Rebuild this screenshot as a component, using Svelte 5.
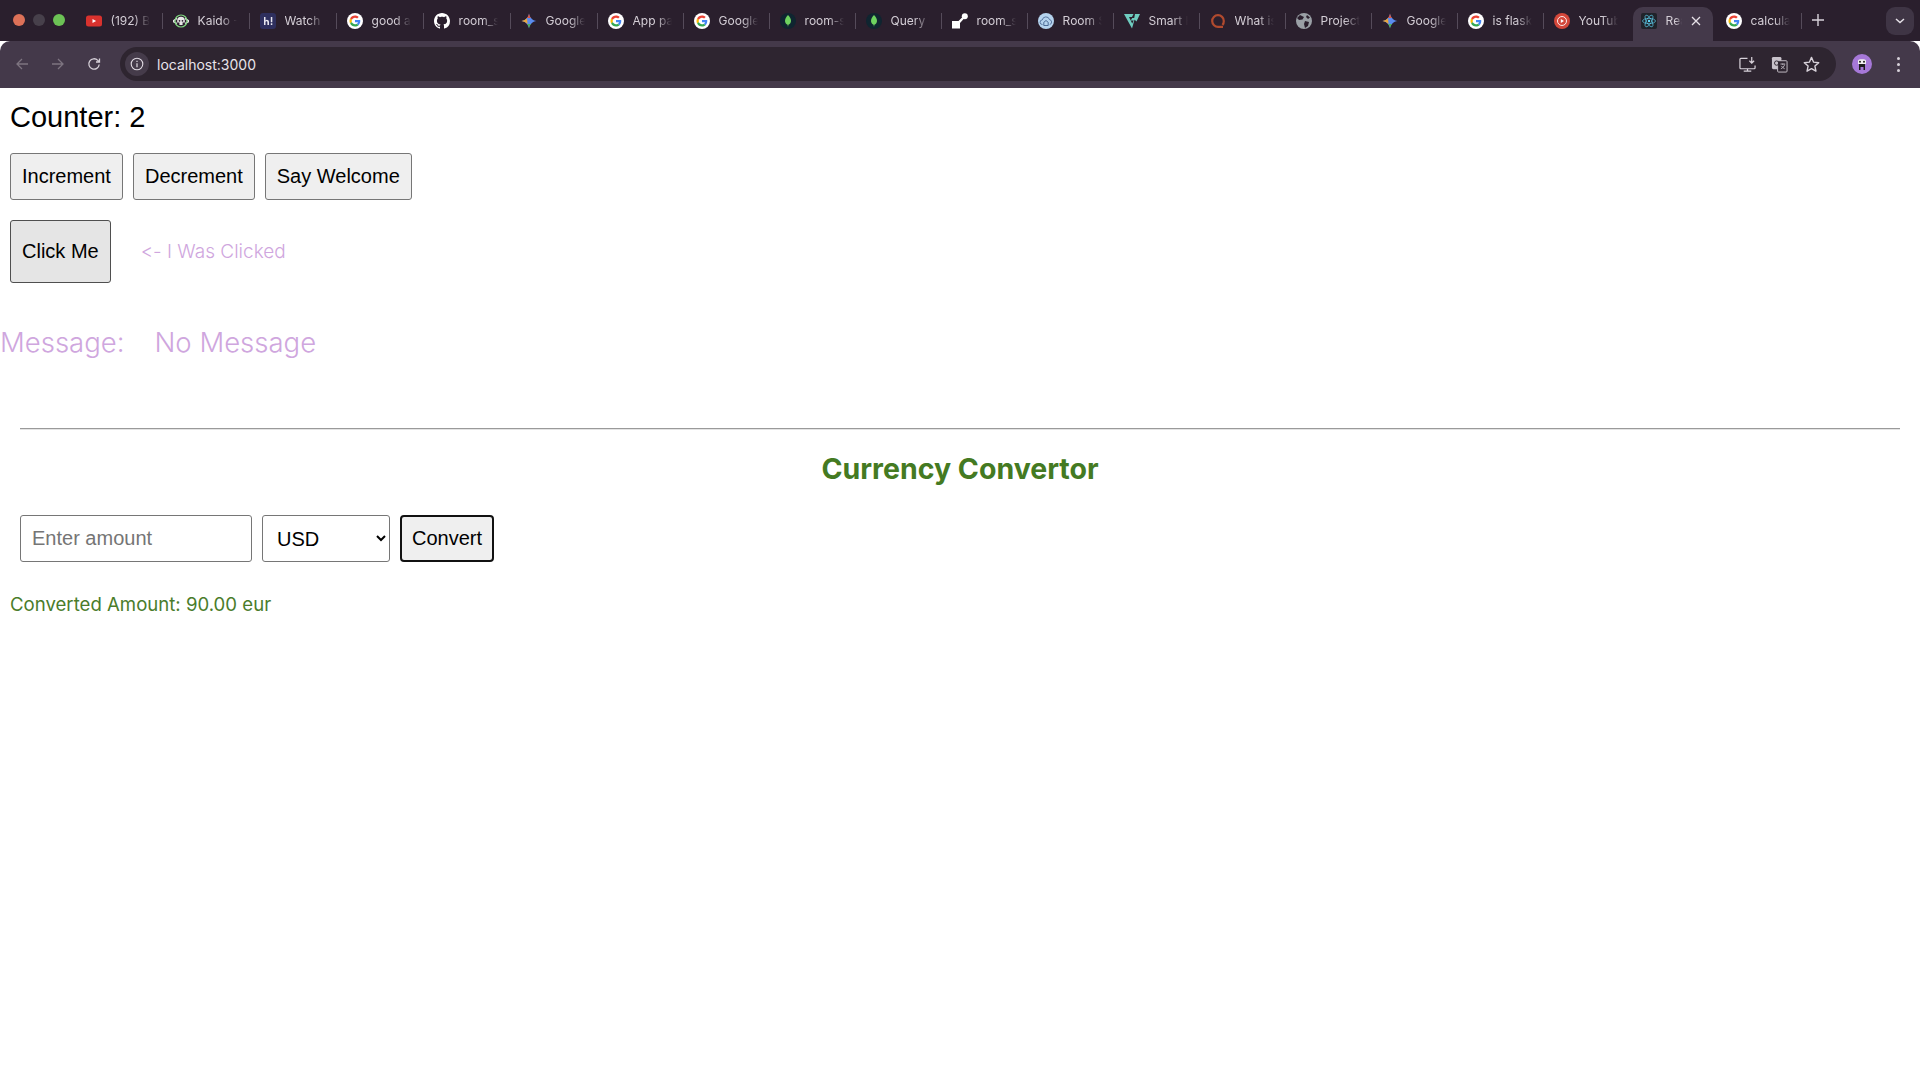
<script>
  const tabs = [
    ['yt', '(192) Bleach'], ['kaido', 'Kaido - Watch'], ['hi', 'Watch Anime'], ['g', 'good and bad'],
    ['gh', 'room_sync'], ['gem', 'Google Gemini'], ['g', 'App password'], ['g', 'Google Search'],
    ['leaf', 'room-sync'], ['leaf', 'Query Result'], ['share', 'room_sync'], ['cloud', 'Room Sync'],
    ['tri', 'Smart Home'], ['q', 'What is it'], ['globe', 'Project Home'], ['gem', 'Google Gemini'],
    ['g', 'is flask good'], ['music', 'YouTube Music'], ['react', 'React App'], ['g', 'calculator']
  ];
</script>

{#snippet icon(kind)}
  {#if kind === 'yt'}
    <svg viewBox="0 0 16 16" class="fav"><rect y="2.5" width="16" height="11" rx="2.5" fill="#d9322e"/><path d="M6.5 6v4l3.6-2z" fill="#fff"/></svg>
  {:else if kind === 'kaido'}
    <svg viewBox="0 0 16 16" class="fav"><path d="M0 8.2 4 5.4M16 8.2 12 5.4M0 8.4 4 10.5M16 8.4 12 10.5" stroke="#e8e8e8" stroke-width="1.4" fill="none"/><circle cx="8" cy="8" r="6" fill="none" stroke="#7fd67f" stroke-width="1.2"/><path d="M4.2 7.5a3.8 3.8 0 0 1 7.6 0v2H9.6V12H6.4V9.5H4.2z" fill="#e8e8e8"/><circle cx="6.5" cy="7.8" r=".9" fill="#2a1f2d"/><circle cx="9.5" cy="7.8" r=".9" fill="#2a1f2d"/></svg>
  {:else if kind === 'hi'}
    <svg viewBox="0 0 16 16" class="fav"><rect width="16" height="16" rx="3" fill="#2e2f5e"/><path d="M4 4v8h1.5V9.4c0-1.4 1.9-1.4 1.9 0V12H9V9c0-2.300-2.500-2.700-3.500-1.600V4zM10.800 4h1.500v5.200h-1.500zM10.800 10.300h1.500V12h-1.500z" fill="#e8e6f0"/></svg>
  {:else if kind === 'g'}
    <svg viewBox="0 0 16 16" class="fav"><circle cx="8" cy="8" r="8" fill="#fff"/><g transform="translate(2.500 2.500) scale(.229)"><path fill="#EA4335" d="M24 9.500c3.540 0 6.710 1.220 9.210 3.600l6.850-6.850C35.900 2.380 30.470 0 24 0 14.620 0 6.510 5.380 2.560 13.220l7.980 6.190C12.430 13.720 17.740 9.500 24 9.500z"/><path fill="#4285F4" d="M46.980 24.550c0-1.570-.15-3.090-.38-4.550H24v9.020h12.940c-.58 2.960-2.260 5.480-4.780 7.180l7.730 6c4.510-4.180 7.090-10.360 7.090-17.650z"/><path fill="#FBBC05" d="M10.530 28.590c-.48-1.450-.76-2.990-.76-4.590s.27-3.140.76-4.590l-7.980-6.190C.92 16.460 0 20.120 0 24c0 3.880.92 7.540 2.560 10.780l7.970-6.190z"/><path fill="#34A853" d="M24 48c6.480 0 11.930-2.130 15.890-5.810l-7.730-6c-2.150 1.450-4.920 2.300-8.160 2.300-6.260 0-11.570-4.220-13.470-9.910l-7.980 6.190C6.510 42.620 14.620 48 24 48z"/></g></svg>
  {:else if kind === 'gh'}
    <svg viewBox="0 0 16 16" class="fav"><path fill="#fff" d="M8 0C3.580 0 0 3.580 0 8c0 3.540 2.290 6.530 5.470 7.590.4.070.55-.17.55-.38 0-.19-.01-.82-.01-1.490-2.010.37-2.530-.49-2.690-.94-.09-.23-.48-.94-.82-1.130-.28-.15-.68-.52-.01-.53.63-.01 1.080.58 1.230.82.72 1.210 1.870.87 2.330.66.070-.52.28-.87.51-1.070-1.780-.2-3.640-.89-3.640-3.950 0-.87.31-1.590.82-2.150-.08-.2-.36-1.020.08-2.120 0 0 .67-.21 2.200.82.64-.18 1.320-.27 2-.27.68 0 1.360.09 2 .27 1.530-1.040 2.200-.82 2.200-.82.44 1.100.16 1.920.08 2.120.51.56.82 1.270.82 2.150 0 3.070-1.870 3.750-3.650 3.950.29.25.54.73.54 1.480 0 1.070-.01 1.930-.01 2.200 0 .21.15.46.55.38A8.013 8.013 0 0016 8c0-4.420-3.580-8-8-8z"/></svg>
  {:else if kind === 'gem'}
    <svg viewBox="0 0 16 16" class="fav"><path d="M8 .5c.6 4 3.500 6.900 7.500 7.500-4 .6-6.900 3.500-7.500 7.500C7.400 11.500 4.500 8.600.5 8 4.500 7.400 7.400 4.500 8 .5z" fill="#5a8cf0"/><path d="M.5 8C2.800 7.650 4.700 6.600 6 5L6.500 11C5 9.400 2.800 8.350.5 8z" fill="#eaa63c"/><path d="M8 .5C7.700 2.500 6.900 4 6 5h4C9.100 4 8.300 2.500 8 .5z" fill="#e0563f"/><path d="M8 15.500c.3-2 1-3.400 2-4.500H6c1 1.100 1.700 2.500 2 4.500z" fill="#4eae5a"/></svg>
  {:else if kind === 'leaf'}
    <svg viewBox="0 0 16 16" class="fav"><circle cx="8" cy="8" r="8" fill="#0f2530"/><path d="M8 2c2 2.200 3 4 3 5.900 0 2-1.400 3.300-2.600 3.900L8 14l-.4-2.200C6.400 11.200 5 9.900 5 7.900 5 6 6 4.200 8 2z" fill="#6ed35f"/></svg>
  {:else if kind === 'share'}
    <svg viewBox="0 0 16 16" class="fav"><circle cx="12.800" cy="3.200" r="3" fill="#fff"/><path d="M0 8h6.500l5-5 1.500 1.500-5 5.500v5.500H0z" fill="#fff"/></svg>
  {:else if kind === 'cloud'}
    <svg viewBox="0 0 16 16" class="fav"><circle cx="8" cy="8" r="8" fill="#b5d3ee"/><path d="M4.500 11.500a2.300 2.300 0 0 1-.2-4.600 3.700 3.700 0 0 1 7.200-.3 2.500 2.500 0 0 1 .2 4.900" fill="none" stroke="#41608c" stroke-width=".8"/><path d="M5.800 12.500V9.300L8 7.500l2.200 1.800v3.200z" fill="none" stroke="#41608c" stroke-width=".9"/></svg>
  {:else if kind === 'tri'}
    <svg viewBox="0 0 16 16" class="fav"><path d="M0 1h9.500L8 4H5l3.200 6.500L9.700 7.500h-3L8.200 5H11L8 15.500zM11 1h5l-3.500 7.500L10 6z" fill="#6fcdc0"/></svg>
  {:else if kind === 'q'}
    <svg viewBox="0 0 16 16" class="fav"><path d="M13 13.800H8.200a5.800 5.800 0 1 1 5.600-5.800c0 1.500-.4 2.900-1.300 4" fill="none" stroke="#b04a2e" stroke-width="2.200"/></svg>
  {:else if kind === 'globe'}
    <svg viewBox="0 0 16 16" class="fav"><circle cx="8" cy="8" r="8" fill="#9aa0a6"/><path d="M4 2 8 4 6.500 6.500 3 7 1 5zM9 8l4 1-1 4-3 2-1-4zM11 2l3 2.500-2 1.500-2-2z" fill="#2a1f2d"/></svg>
  {:else if kind === 'music'}
    <svg viewBox="0 0 16 16" class="fav"><circle cx="8" cy="8" r="8" fill="#d4473a"/><circle cx="8" cy="8" r="4.500" fill="none" stroke="#fff" stroke-width=".9"/><path d="M6.800 6v4l3.200-2z" fill="#fff"/></svg>
  {:else if kind === 'react'}
    <svg viewBox="0 0 16 16" class="fav"><rect width="16" height="16" rx="2" fill="#20232a"/><g fill="none" stroke="#61dafb" stroke-width=".6"><ellipse cx="8" cy="8" rx="6.500" ry="2.600"/><ellipse cx="8" cy="8" rx="6.500" ry="2.600" transform="rotate(60 8 8)"/><ellipse cx="8" cy="8" rx="6.500" ry="2.600" transform="rotate(120 8 8)"/></g><circle cx="8" cy="8" r="1.200" fill="#61dafb"/></svg>
  {/if}
{/snippet}

<div class="browser">
  <div class="strip">
    <div class="lights"><i class="red"></i><i class="grey"></i><i class="green"></i></div>
    <div class="tabs">
      {#each tabs as [kind, title], i}
        <div class="tab" class:active={kind === 'react'} class:nosep={kind === 'music' || kind === 'react'}>
          {@render icon(kind)}
          <span class="title">{title}</span>
          {#if kind === 'react'}
            <svg class="close" viewBox="0 0 10 10"><path d="M1 1l8 8M9 1l-8 8" stroke="#e6e1e8" stroke-width="1.300"/></svg>
          {/if}
        </div>
      {/each}
    </div>
    <svg class="plus" viewBox="0 0 12 12"><path d="M6 0v12M0 6h12" stroke="#d8d2da" stroke-width="1.400"/></svg>
    <div class="dropdown"><svg viewBox="0 0 10 6"><path d="M1 1l4 3.500L9 1" fill="none" stroke="#e6e1e8" stroke-width="1.500"/></svg></div>
  </div>
  <div class="toolbar">
    <svg class="nav dim" viewBox="0 0 14 14"><path d="M13 7H2M7 2 2 7l5 5" fill="none" stroke="#7d7480" stroke-width="1.300"/></svg>
    <svg class="nav dim" viewBox="0 0 14 14"><path d="M1 7h11M7 2l5 5-5 5" fill="none" stroke="#7d7480" stroke-width="1.300"/></svg>
    <svg class="nav" viewBox="0 0 14 14"><path d="M12.200 7.500A5.200 5.200 0 1 1 10.800 3.400L12.500 5M12.500 1.500V5H9" fill="none" stroke="#d6d0d8" stroke-width="1.300"/></svg>
    <div class="omni">
      <span class="info"><svg viewBox="0 0 14 14"><circle cx="7" cy="7" r="5.800" fill="none" stroke="#e0dae2" stroke-width="1.100"/><path d="M7 6.200v4M7 3.800v1.200" stroke="#e0dae2" stroke-width="1.200"/></svg></span>
      <span class="url">localhost:3000</span>
      <span class="spacer"></span>
      <svg class="act" viewBox="0 0 18 16"><path d="M9 1.500H2a1 1 0 0 0-1 1v9a1 1 0 0 0 1 1h14a1 1 0 0 0 1-1V9M5 15h8M9 12.500V15M13.500 0v6M11 4l2.500 2.500L16 4" fill="none" stroke="#d8d2da" stroke-width="1.300"/></svg>
      <svg class="act" viewBox="0 0 18 18"><rect x="1" y="1" width="10" height="13" rx="1.500" fill="#c8c2ca"/><rect x="7" y="5" width="10" height="12" rx="1" fill="#2e2530" stroke="#c8c2ca" stroke-width="1"/><circle cx="6" cy="7.500" r="2.300" fill="none" stroke="#2e2530" stroke-width="1"/><path d="M10 8.500h5M12.500 8v1.500M14.500 9c-.5 2-2 3.500-4 4.500M11 10.500c.8 1.300 2 2.300 3.500 3" fill="none" stroke="#c8c2ca" stroke-width=".9"/></svg>
      <svg class="act" viewBox="0 0 16 16"><path d="M8 1.300l2 4.500 4.800.5-3.600 3.200 1 4.800L8 11.900l-4.200 2.400 1-4.800L1.200 6.300 6 5.800z" fill="none" stroke="#d8d2da" stroke-width="1.300" stroke-linejoin="round"/></svg>
    </div>
    <span class="avatar"><svg viewBox="0 0 20 20"><circle cx="10" cy="10" r="10" fill="#a678d8"/><path d="M6 6.500c0-1.800 8-1.800 8 0V10H6z" fill="#f0eef0"/><circle cx="8" cy="7.800" r="1" fill="#222"/><circle cx="12" cy="7.800" r="1" fill="#222"/><path d="M7 10h6v6h-1.500v-3h-3v3H7z" fill="#1c1c1c"/></svg></span>
    <span class="kebab"><i></i><i></i><i></i></span>
  </div>
</div>

<main>
  <div class="counter">Counter: 2</div>
  <div class="actions">
    <button>Increment</button>
    <button>Decrement</button>
    <button>Say Welcome</button>
  </div>
  <div class="clickrow">
    <button class="hover">Click Me</button>
    <span class="clicked">&lt;- I Was Clicked</span>
  </div>
  <div class="message"><span>Message:</span><span>No Message</span></div>
  <hr />
  <h2>Currency Convertor</h2>
  <div class="form">
    <input placeholder="Enter amount" />
    <select><option>USD</option><option>EUR</option></select>
    <button class="focus">Convert</button>
  </div>
  <div class="result">Converted Amount: 90.00 eur</div>
</main>

<style>
  :global(body) { background: #fff; }
  .browser { height: 88px; display: flex; flex-direction: column; font-family: Inter, "Liberation Sans", sans-serif; }
  .strip { height: 41px; background: #2a1f2d; display: flex; align-items: flex-start; position: relative; }
  .lights { width: 76px; flex: none; display: flex; gap: 8px; padding: 14px 0 0 13px; box-sizing: border-box; }
  .lights i { width: 12px; height: 12px; border-radius: 50%; }
  .red { background: #dd7158; }
  .grey { background: #47404b; }
  .green { background: #6cc255; }
  .tabs { display: flex; }
  .tab { width: 86px; height: 34px; margin-top: 7px; flex: none; box-sizing: border-box; padding: 0 0 7px 10px; display: flex; align-items: center; position: relative; }
  .tab:nth-child(-n+6) { width: 87px; }
  .tab::after { content: ""; position: absolute; right: 0; top: 6px; height: 16px; width: 1px; background: #554b5a; }
  .tab.nosep::after { display: none; }
  .fav { width: 16px; height: 16px; flex: none; }
  .title { margin-left: 8.600px; width: 39px; overflow: hidden; white-space: nowrap; font-size: 12px; color: #d4ced6; -webkit-mask-image: linear-gradient(90deg, #000 60%, transparent 100%); mask-image: linear-gradient(90deg, #000 60%, transparent 100%); }
  .tab.active { background: #44394a; border-radius: 10px 10px 0 0; margin-left: 3px; margin-right: 3px; width: 80px; padding-left: 8px; }
  .tab.active .title { width: 16px; }
  .close { width: 10px; height: 10px; margin-left: 9px; flex: none; }
  .plus { width: 12px; height: 12px; flex: none; margin: 14px 0 0 10px; }
  .dropdown { position: absolute; left: 1886px; top: 7px; width: 28px; height: 28px; border-radius: 9px; background: #3f3545; display: flex; align-items: center; justify-content: center; }
  .dropdown svg { width: 10px; height: 6px; }
  .toolbar { height: 47px; background: #44394a; display: flex; align-items: center; box-sizing: border-box; padding: 0 0 1px 15px; border-radius: 10px 10px 0 0; }
  .nav { width: 14px; height: 14px; flex: none; margin-right: 21px; }
  .nav:nth-child(2) { margin-left: 1px; }
  .nav:nth-child(3) { margin-left: 1px; margin-right: 19px; }
  .omni { width: 1716px; height: 34px; background: #2e2530; border-radius: 17px; display: flex; align-items: center; flex: none; box-sizing: border-box; padding: 0 16px 0 5px; }
  .info { width: 24px; height: 24px; border-radius: 50%; background: #453b4a; display: flex; align-items: center; justify-content: center; flex: none; }
  .info svg { width: 14px; height: 14px; }
  .url { margin-left: 8px; font-size: 14px; color: #e8e3ea; }
  .spacer { flex: 1; }
  .act { width: 17px; height: 17px; flex: none; margin-left: 15px; }
  .avatar { width: 20px; height: 20px; flex: none; margin-left: 16px; }
  .avatar svg { width: 20px; height: 20px; display: block; }
  .kebab { display: flex; flex-direction: column; gap: 3px; margin-left: 25px; }
  .kebab i { width: 3px; height: 3px; border-radius: 50%; background: #d8d2da; }

  main { font-family: "Liberation Sans", Arial, sans-serif; }
  .counter { font-size: 29px; line-height: 32px; color: #000; padding: 13px 0 0 10px; }
  button { font-family: "Liberation Sans", Arial, sans-serif; font-size: 20px; height: 47px; padding: 0 11px; background: #efefef; border: 1px solid #767676; border-radius: 3px; color: #000; box-sizing: border-box; }
  .actions { display: flex; gap: 10px; padding: 20px 0 0 10px; }
  .clickrow { display: flex; align-items: center; gap: 30px; padding: 20px 0 0 10px; }
  .hover { height: 63px; background: #e5e5e5; border-color: #4f4f4f; }
  .clicked { font-family: Inter, sans-serif; font-weight: 350; font-size: 19px; color: #cfa6de; font-variant-ligatures: none; font-feature-settings: "calt" 0; }
  .message { display: flex; gap: 30px; margin-top: 40px; font-family: Inter, sans-serif; font-weight: 350; font-size: 27.500px; line-height: 38px; color: #cfa6de; }
  hr { margin: 67px 20px 0; border: 0; border-top: 1px solid #9a9a9a; border-bottom: 1px solid #e4e4e4; }
  h2 { margin: 20px 0 0; text-align: center; font-family: Inter, sans-serif; font-weight: 700; font-size: 28.500px; line-height: 38px; color: #447a22; }
  .form { display: flex; gap: 10px; padding: 27px 0 0 20px; }
  input { width: 232px; height: 47px; box-sizing: border-box; padding: 0 11px; font: 20px "Liberation Sans", Arial, sans-serif; background: #fff; border: 1px solid #767676; border-radius: 3px; }
  input::placeholder { color: #757575; }
  select { width: 128px; height: 47px; box-sizing: border-box; padding: 0 10px; font: 20px "Liberation Sans", Arial, sans-serif; color: #000; background: #fff; border: 1px solid #767676; border-radius: 3px; }
  .focus { border: 2px solid #111; border-radius: 4px; padding: 0 10px; }
  .result { font-family: Inter, sans-serif; font-weight: 400; font-size: 18.600px; line-height: 24px; color: #4a7c2b; padding: 30px 0 0 10px; }
</style>
